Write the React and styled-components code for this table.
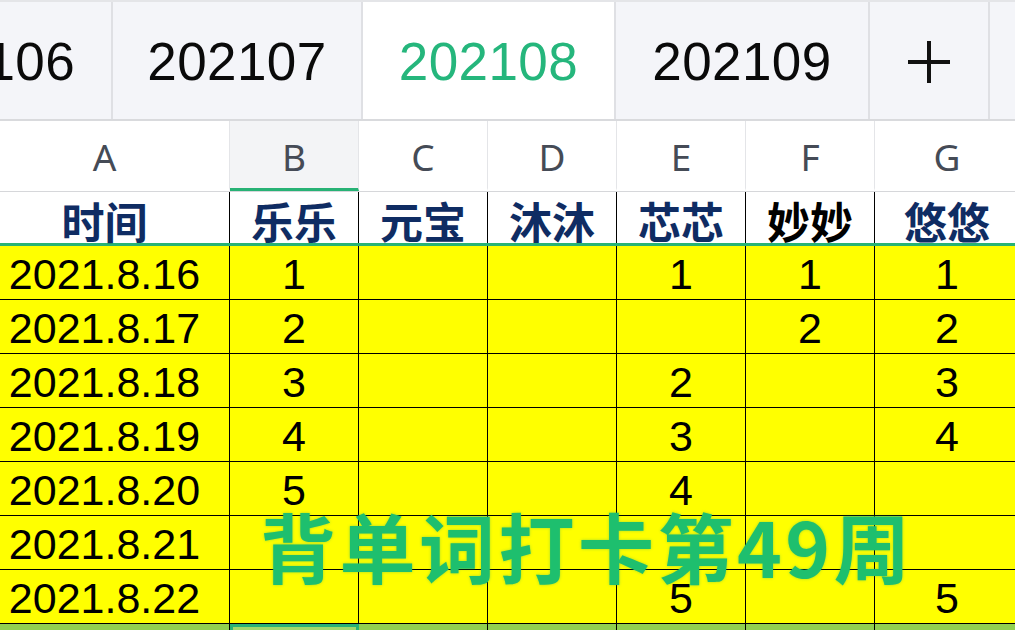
import React from 'react';
import styled, { createGlobalStyle } from 'styled-components';

const GlobalStyle = createGlobalStyle`
  html, body { margin: 0; padding: 0; background: #fff; overflow: hidden; }
  * { box-sizing: border-box; }
`;

const COLS = '250px 129px 129px 129px 129px 129px 145px';
const GREEN = '#27b275';

const sheets = [
  { name: '202106', w: 253 },
  { name: '202107', w: 250 },
  { name: '202108', w: 253, active: true },
  { name: '202109', w: 254 },
];

const letters = ['A', 'B', 'C', 'D', 'E', 'F', 'G'];
const names = ['时间', '乐乐', '元宝', '沐沐', '芯芯', '妙妙', '悠悠'];

const rows = [
  ['2021.8.16', '1', '', '', '1', '1', '1'],
  ['2021.8.17', '2', '', '', '', '2', '2'],
  ['2021.8.18', '3', '', '', '2', '', '3'],
  ['2021.8.19', '4', '', '', '3', '', '4'],
  ['2021.8.20', '5', '', '', '4', '', ''],
  ['2021.8.21', '', '', '', '', '', ''],
  ['2021.8.22', '', '', '', '5', '', '5'],
];

function App() {
  return (
    <Page>
      <GlobalStyle />
      <TabBar>
        {sheets.map((s) => (
          <Tab key={s.name} $w={s.w} $active={s.active}>{s.name}</Tab>
        ))}
        <Tab $w={120}>
          <PlusIco viewBox="0 0 46 46">
            <path d="M23 2v42M2 23h42" stroke="#111" strokeWidth="4" />
          </PlusIco>
        </Tab>
        <Tab $w={60} />
      </TabBar>

      <Sheet>
        <LetterRow>
          {letters.map((l) => (
            <Letter key={l} $sel={l === 'B'}>{l}</Letter>
          ))}
        </LetterRow>

        <HeadRow>
          {names.map((n) => (
            <HeadCell key={n} $black={n === '妙妙'}>{n}</HeadCell>
          ))}
        </HeadRow>

        {rows.map((r) => (
          <DataRow key={r[0]}>
            {r.map((v, i) => (
              <Cell key={i}>{v}</Cell>
            ))}
          </DataRow>
        ))}

        <GreenRow>
          {letters.map((l) => (
            <GreenCell key={l} $sel={l === 'B'} />
          ))}
        </GreenRow>

        <Caption>背单词打卡第49周</Caption>
      </Sheet>
    </Page>
  );
}

const Page = styled.div`
  width: 1015px; height: 630px; overflow: hidden; background: #fff;
  font-family: "Liberation Sans", Arial, sans-serif;
`;

const TabBar = styled.div`
  display: flex; height: 121px; margin-left: -140px;
  border-top: 2px solid #e4e5e8; border-bottom: 2px solid #d9dadd;
`;

const Tab = styled.div`
  flex: 0 0 ${(p) => p.$w}px;
  display: flex; align-items: center; justify-content: center;
  background: ${(p) => (p.$active ? '#fff' : '#f4f5f9')};
  color: ${(p) => (p.$active ? '#25b67c' : '#0a0a0a')};
  border-right: 2px solid #dfe0e4;
  font-size: 53px; letter-spacing: 0.4px; padding-top: 2px;
`;

const PlusIco = styled.svg`
  width: 46px; height: 46px;
`;

const Sheet = styled.div`
  position: relative; margin-left: -20px;
`;

const LetterRow = styled.div`
  display: grid; grid-template-columns: ${COLS}; height: 71px;
  border-bottom: 1px solid #d6d7da;
`;

const Letter = styled.div`
  display: flex; align-items: center; justify-content: center;
  font-family: "Noto Sans", "Open Sans", sans-serif; font-size: 37px; color: #454b56;
  background: ${(p) => (p.$sel ? '#f3f4f6' : '#fff')};
  border-right: 1px solid #e4e5e8;
  border-bottom: 3px solid ${(p) => (p.$sel ? GREEN : 'transparent')};
  padding-top: 3px;
`;

const HeadRow = styled.div`
  display: grid; grid-template-columns: ${COLS}; height: 54px;
  border-bottom: 3px solid ${GREEN};
`;

const HeadCell = styled.div`
  display: flex; align-items: flex-end; justify-content: center;
  border-right: 1px solid #000;
  font-family: "Noto Sans CJK SC", "Noto Sans", sans-serif; font-weight: 700;
  font-size: 43px; line-height: 1; padding-bottom: 1px;
  color: ${(p) => (p.$black ? '#000' : '#0f2c63')};
`;

const DataRow = styled.div`
  display: grid; grid-template-columns: ${COLS}; height: 54px;
  background: #ffff00; border-bottom: 1px solid #000;
`;

const Cell = styled.div`
  display: flex; align-items: center; justify-content: center;
  border-right: 1px solid #000; color: #000;
  font-size: 43px; line-height: 1; padding-top: 3px;
`;

const GreenRow = styled.div`
  display: grid; grid-template-columns: ${COLS}; height: 54px;
  background: #92d050;
`;

const GreenCell = styled.div`
  border-right: 1px solid ${(p) => (p.$sel ? 'transparent' : '#000')};
  ${(p) => p.$sel && `background: #a2d86a; border: 3px solid ${GREEN};`}
`;

const Caption = styled.div`
  position: absolute; left: 280px; top: 386px;
  font-family: "Noto Sans CJK SC", "Noto Sans", sans-serif; font-weight: 600;
  font-size: 76px; line-height: 1; letter-spacing: 3.5px;
  color: #1ebf6e; white-space: nowrap;
  text-shadow: 0 0 3px rgba(40, 170, 100, 0.45);
`;

export default App;
